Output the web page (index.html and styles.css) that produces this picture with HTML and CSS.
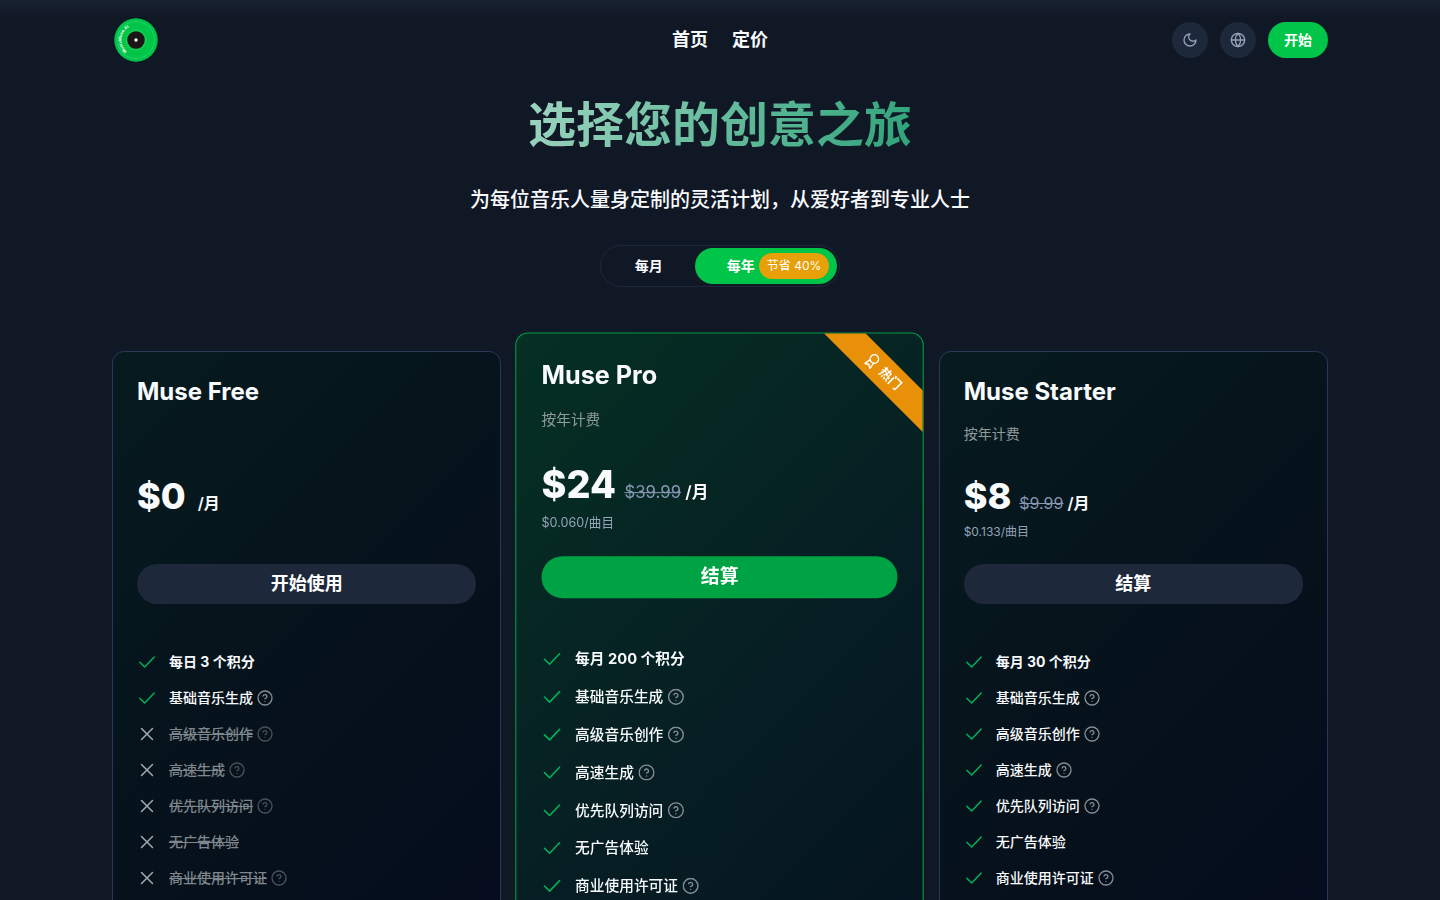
FILE: index.html
```
<!DOCTYPE html>
<html lang="zh-CN">
<head>
<meta charset="utf-8">
<meta name="viewport" content="width=device-width, initial-scale=1">
<title>MusicMuse.AI 定价</title>
<link rel="stylesheet" href="styles.css">
</head>
<body>
<svg class="sprite" aria-hidden="true">
  <symbol id="check" viewBox="0 0 20 20"><path d="M2.8 10.2 7.7 15 17.2 5"/></symbol>
  <symbol id="cross" viewBox="0 0 20 20"><path d="M4.5 4.5l11 11M15.500 4.5l-11 11"/></symbol>
  <symbol id="help" viewBox="0 0 24 24"><circle cx="12" cy="12" r="10.500"/><path d="M9.09 9a3 3 0 0 1 5.83 1c0 2-3 3-3 3M12 17h.01"/></symbol>
</svg>

<header class="site-header">
  <a class="logo" href="#" aria-label="MusicMuse.AI">
    <svg viewBox="0 0 48 48" width="48" height="48">
      <defs><path id="label-arc" d="M14.800 35.300a14.500 14.500 0 0 1 9.200-25.800"/></defs>
      <circle cx="24" cy="24" r="21.700" fill="#00c548"/>
      <circle cx="24" cy="24" r="18.500" fill="none" stroke="#1fd364" stroke-width="1"/>
      <circle cx="24" cy="24" r="10" fill="none" stroke="#1fce5c" stroke-width="1"/>
      <circle cx="24" cy="24" r="8.700" fill="#1b1516"/>
      <circle cx="24" cy="24" r="1.700" fill="#fff"/>
      <text class="logo-text"><textPath href="#label-arc">MusicMuse.AI</textPath></text>
    </svg>
  </a>
  <nav class="nav">
    <a href="#">首页</a>
    <a href="#">定价</a>
  </nav>
  <div class="actions">
    <button class="icon-button" type="button" aria-label="深色模式">
      <svg viewBox="0 0 24 24"><path d="M12 3a6 6 0 0 0 9 9 9 9 0 1 1-9-9Z"/></svg>
    </button>
    <button class="icon-button" type="button" aria-label="语言">
      <svg viewBox="0 0 24 24"><circle cx="12" cy="12" r="10"/><path d="M12 2a14.500 14.500 0 0 0 0 20 14.500 14.500 0 0 0 0-20M2 12h20"/></svg>
    </button>
    <button class="start-button" type="button">开始</button>
  </div>
</header>

<main class="page">
  <h1>选择您的创意之旅</h1>
  <p class="lead">为每位音乐人量身定制的灵活计划，从爱好者到专业人士</p>

  <div class="period" role="group" aria-label="计费周期">
    <button type="button" class="period-option">每月</button>
    <button type="button" class="period-option active">每年<span class="saving">节省 40%</span></button>
  </div>

  <section class="plans">
    <article class="plan">
      <h2>Muse Free</h2>
      <p class="billing"></p>
      <p class="price"><strong>$0</strong><span class="month only">/月</span></p>
      <p class="per-track"></p>
      <button type="button" class="cta">开始使用</button>
      <ul class="features">
        <li><svg class="mark yes"><use href="#check"/></svg><b>每日 3 个积分</b></li>
        <li><svg class="mark yes"><use href="#check"/></svg><span>基础音乐生成</span><svg class="help"><use href="#help"/></svg></li>
        <li class="off"><svg class="mark"><use href="#cross"/></svg><s>高级音乐创作</s><svg class="help"><use href="#help"/></svg></li>
        <li class="off"><svg class="mark"><use href="#cross"/></svg><s>高速生成</s><svg class="help"><use href="#help"/></svg></li>
        <li class="off"><svg class="mark"><use href="#cross"/></svg><s>优先队列访问</s><svg class="help"><use href="#help"/></svg></li>
        <li class="off"><svg class="mark"><use href="#cross"/></svg><s>无广告体验</s></li>
        <li class="off"><svg class="mark"><use href="#cross"/></svg><s>商业使用许可证</s><svg class="help"><use href="#help"/></svg></li>
      </ul>
    </article>

    <article class="plan featured">
      <div class="ribbon">
        <svg viewBox="0 0 24 24"><circle cx="12" cy="8" r="6"/><path d="m15.477 12.890 1.515 8.526a.5.5 0 0 1-.81.47l-3.580-2.687a1 1 0 0 0-1.197 0l-3.586 2.686a.5.5 0 0 1-.81-.469l1.514-8.526"/></svg>
        <span>热门</span>
      </div>
      <h2>Muse Pro</h2>
      <p class="billing">按年计费</p>
      <p class="price"><strong>$24</strong><s>$39.99</s><span class="month">/月</span></p>
      <p class="per-track">$0.060/曲目</p>
      <button type="button" class="cta">结算</button>
      <ul class="features">
        <li><svg class="mark yes"><use href="#check"/></svg><b>每月 200 个积分</b></li>
        <li><svg class="mark yes"><use href="#check"/></svg><span>基础音乐生成</span><svg class="help"><use href="#help"/></svg></li>
        <li><svg class="mark yes"><use href="#check"/></svg><span>高级音乐创作</span><svg class="help"><use href="#help"/></svg></li>
        <li><svg class="mark yes"><use href="#check"/></svg><span>高速生成</span><svg class="help"><use href="#help"/></svg></li>
        <li><svg class="mark yes"><use href="#check"/></svg><span>优先队列访问</span><svg class="help"><use href="#help"/></svg></li>
        <li><svg class="mark yes"><use href="#check"/></svg><span>无广告体验</span></li>
        <li><svg class="mark yes"><use href="#check"/></svg><span>商业使用许可证</span><svg class="help"><use href="#help"/></svg></li>
      </ul>
    </article>

    <article class="plan">
      <h2>Muse Starter</h2>
      <p class="billing">按年计费</p>
      <p class="price"><strong>$8</strong><s>$9.99</s><span class="month">/月</span></p>
      <p class="per-track">$0.133/曲目</p>
      <button type="button" class="cta">结算</button>
      <ul class="features">
        <li><svg class="mark yes"><use href="#check"/></svg><b>每月 30 个积分</b></li>
        <li><svg class="mark yes"><use href="#check"/></svg><span>基础音乐生成</span><svg class="help"><use href="#help"/></svg></li>
        <li><svg class="mark yes"><use href="#check"/></svg><span>高级音乐创作</span><svg class="help"><use href="#help"/></svg></li>
        <li><svg class="mark yes"><use href="#check"/></svg><span>高速生成</span><svg class="help"><use href="#help"/></svg></li>
        <li><svg class="mark yes"><use href="#check"/></svg><span>优先队列访问</span><svg class="help"><use href="#help"/></svg></li>
        <li><svg class="mark yes"><use href="#check"/></svg><span>无广告体验</span></li>
        <li><svg class="mark yes"><use href="#check"/></svg><span>商业使用许可证</span><svg class="help"><use href="#help"/></svg></li>
      </ul>
    </article>
  </section>
</main>
</body>
</html>
```
FILE: styles.css
```
* { box-sizing: border-box; }
body {
  margin: 0;
  background: linear-gradient(#172131, #111825 18px) no-repeat #111825;
  color: #f8fafc;
  font: 14px/20px Inter, "Noto Sans CJK SC", sans-serif;
}
h1, h2, p, ul { margin: 0; padding: 0; }
button { border: 0; font: inherit; color: inherit; cursor: pointer; }
a { color: inherit; text-decoration: none; }
svg { fill: none; stroke: currentColor; stroke-linecap: round; stroke-linejoin: round; }
.sprite { position: absolute; width: 0; height: 0; }

.site-header {
  display: grid;
  grid-template-columns: 1fr auto 1fr;
  align-items: center;
  max-width: 1216px;
  height: 80px;
  margin: 0 auto;
}
.logo { justify-self: start; }
.logo svg { display: block; stroke: none; }
.logo-text { fill: #fff; font-size: 4px; font-weight: 700; }
.nav { display: flex; gap: 24px; font-size: 18px; line-height: 28px; font-weight: 600; }
.actions { display: flex; justify-content: flex-end; gap: 12px; }
.icon-button {
  display: grid;
  place-items: center;
  width: 36px;
  height: 36px;
  padding: 0;
  border-radius: 50%;
  background: #1e283b;
  color: #94a3b8;
}
.icon-button svg { width: 16px; height: 16px; stroke-width: 2; }
.start-button { height: 36px; padding: 0 16px; border-radius: 18px; background: #00c548; color: #fff; font-weight: 700; }

.page { display: flex; flex-direction: column; align-items: center; max-width: 1216px; margin: 0 auto; padding: 15px 0 48px; }
h1 {
  font-size: 48px;
  line-height: 60px;
  font-weight: 700;
  color: transparent;
  background: linear-gradient(110deg, #9dd4bf, #2ea37a);
  background-clip: text;
  -webkit-background-clip: text;
}
.lead { margin-top: 31px; font-size: 20px; line-height: 28px; font-weight: 500; }

.period { display: flex; margin-top: 31px; padding: 2px; border: 1px solid #1e293b; border-radius: 21px; }
.period-option { display: flex; align-items: center; gap: 4px; height: 36px; padding: 0 32px; border-radius: 18px; background: transparent; font-weight: 600; }
.period-option.active { padding-right: 8px; background: #00c548; color: #fff; }
.saving { padding: 4px 8px; border-radius: 13px; background: #e7a008; font-size: 12px; line-height: 18px; font-weight: 400; }

.plans { display: grid; grid-template-columns: repeat(3, 1fr); gap: 24px; width: 100%; margin-top: 64px; }
.plan {
  position: relative;
  display: flex;
  flex-direction: column;
  min-height: 740px;
  padding: 24px;
  border: 1px solid #28385a;
  border-radius: 12px;
  background: linear-gradient(135deg, #061b1f, #06111b 50%, #040a1f);
}
.featured { overflow: hidden; border-color: #00a344; background: linear-gradient(135deg, #053023, #061e23 50%, #05101f); transform: scale(1.05); }
h2 { font-size: 24px; line-height: 32px; font-weight: 700; }
.billing { margin-top: 16px; min-height: 20px; color: #8f9a9b; }
.price { display: flex; align-items: baseline; margin-top: 32px; line-height: 40px; }
.price strong { font-size: 36px; font-weight: 800; }
.price s { margin-left: 8px; color: #8796b1; font-size: 16px; }
.month { margin-left: 4px; font-size: 16px; font-weight: 600; }
.month.only { margin-left: 12px; }
.per-track { min-height: 16px; margin-top: 1px; color: #94a3b8; font-size: 12px; line-height: 16px; }
.cta { height: 40px; margin-top: 24px; border-radius: 20px; background: #1e283b; color: #fff; font-size: 18px; font-weight: 700; }
.featured .cta { background: #00a344; }
.features { display: flex; flex-direction: column; gap: 16px; margin-top: 48px; list-style: none; }
.features li { display: flex; align-items: center; font-weight: 500; }
.features b { font-weight: 700; }
.mark { width: 20px; height: 20px; margin-right: 12px; color: #a3a9ad; stroke-width: 1.5; }
.mark.yes { color: #00b05b; }
.help { width: 16px; height: 16px; margin-left: 4px; color: #848d94; stroke-width: 2; }
.off { color: #7f878d; }
.off .help { color: #485159; }

.ribbon {
  position: absolute;
  top: 22px;
  right: -42px;
  display: flex;
  align-items: center;
  justify-content: center;
  gap: 4px;
  width: 160px;
  height: 28px;
  background: #e79008;
  color: #fff;
  font-size: 12px;
  line-height: 16px;
  font-weight: 600;
  transform: rotate(45deg);
}
.ribbon svg { width: 16px; height: 16px; stroke-width: 2; }
```
